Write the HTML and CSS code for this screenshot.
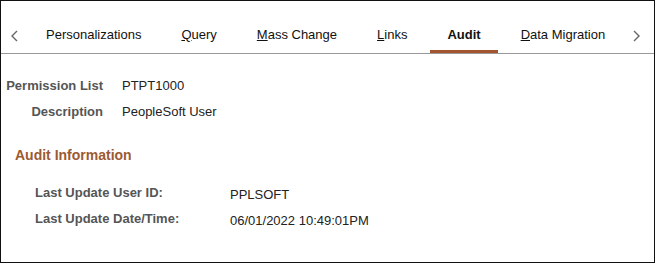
FILE: index.html
```html
<!DOCTYPE html>
<html lang="en">
<head>
    <meta charset="UTF-8">
    <title>Permission List - Audit</title>
    <link rel="stylesheet" href="styles.css">
</head>
<body>
    <div class="frame">
        <div class="tabbar">
            <span class="arrow arrow-left">
                <svg width="7" height="12" viewBox="0 0 7 12"><polyline points="6,1 1,6 6,11" fill="none" stroke="#666" stroke-width="1.4"/></svg>
            </span>
            <a class="tab">Personalizations</a>
            <a class="tab"><u>Q</u>uery</a>
            <a class="tab"><u>M</u>ass Change</a>
            <a class="tab"><u>L</u>inks</a>
            <a class="tab active">Audit</a>
            <a class="tab"><u>D</u>ata Migration</a>
            <span class="arrow arrow-right">
                <svg width="7" height="12" viewBox="0 0 7 12"><polyline points="1,1 6,6 1,11" fill="none" stroke="#666" stroke-width="1.4"/></svg>
            </span>
        </div>

        <div class="keys">
            <div class="key-row">
                <span class="key-label">Permission List</span>
                <span class="key-value">PTPT1000</span>
            </div>
            <div class="key-row">
                <span class="key-label">Description</span>
                <span class="key-value">PeopleSoft User</span>
            </div>
        </div>

        <h2 class="section-title">Audit Information</h2>

        <div class="audit">
            <div class="audit-row">
                <span class="audit-label">Last Update User ID:</span>
                <span class="audit-value">PPLSOFT</span>
            </div>
            <div class="audit-row">
                <span class="audit-label">Last Update Date/Time:</span>
                <span class="audit-value">06/01/2022 10:49:01PM</span>
            </div>
        </div>
    </div>
</body>
</html>
```

FILE: styles.css
```css
body {
    margin: 0;
    font-family: "Liberation Sans", Arial, sans-serif;
    font-size: 13px;
    color: #222;
    background: white;
}
.frame {
    box-sizing: border-box;
    width: 655px;
    height: 263px;
    border: 1px solid #111;
}
.tabbar {
    display: flex;
    align-items: flex-end;
    height: 52px;
    border-bottom: 1px solid #999;
}
.arrow {
    display: flex;
    align-items: center;
    justify-content: center;
    height: 34px;
}
.arrow-left {
    width: 25px;
    padding-left: 2px;
    box-sizing: border-box;
}
.arrow-right {
    width: 18px;
    margin-left: 2px;
}
.tab {
    display: block;
    padding: 0 17px;
    margin: 0 3px;
    line-height: 31px;
    border-bottom: 3px solid transparent;
    color: #111;
    cursor: pointer;
}
.tab u {
    text-decoration: underline;
}
.tab.active {
    font-weight: bold;
    border-bottom-color: #a3552f;
}
.keys {
    margin-top: 19px;
}
.key-row {
    display: flex;
    line-height: 26px;
}
.key-label {
    flex-shrink: 0;
    width: 102px;
    text-align: right;
    white-space: nowrap;
    font-weight: bold;
    color: #555;
}
.key-value {
    margin-left: 19px;
}
.section-title {
    margin: 20px 0 0 14px;
    font-size: 14px;
    line-height: 20px;
    color: #9c5a32;
}
.audit {
    margin-top: 16px;
    padding-left: 34px;
}
.audit-row {
    display: flex;
    line-height: 24px;
}
.audit-label {
    flex-shrink: 0;
    width: 195px;
    white-space: nowrap;
    font-weight: bold;
    color: #555;
}
.audit-value {
    padding-top: 2px;
}
```
